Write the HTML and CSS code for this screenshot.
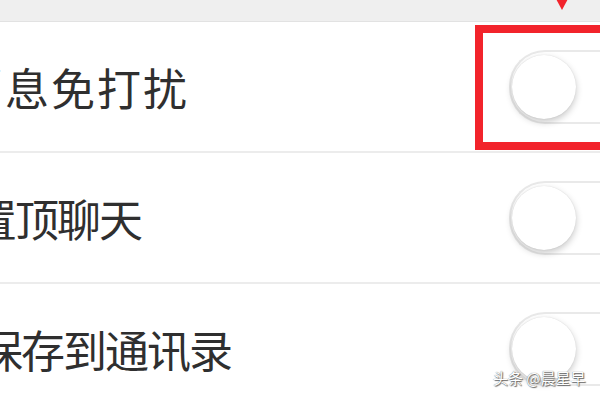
FILE: index.html
```html
<!DOCTYPE html>
<html lang="zh-CN">
<head>
  <meta charset="UTF-8" />
  <meta name="viewport" content="width=device-width, initial-scale=1.0"/>
  <title>聊天设置</title>
  <link rel="stylesheet" href="styles.css">
</head>
<body>

  <div class="top-bar">
    <span class="arrow"></span>
  </div>

  <div class="settings">
    <div class="row">
      <span class="label label-mute">消息免打扰</span>
      <span class="switch"><span class="knob"></span></span>
      <!-- highlight box -->
      <span class="highlight"></span>
    </div>
    <div class="row">
      <span class="label label-top">置顶聊天</span>
      <span class="switch"><span class="knob"></span></span>
    </div>
    <div class="row">
      <span class="label label-save">保存到通讯录</span>
      <span class="switch"><span class="knob"></span></span>
    </div>
  </div>

  <div class="watermark">头条 @晨星早</div>

</body>
</html>
```

FILE: styles.css
```css
body {
  margin: 0;
  width: 600px;
  height: 400px;
  overflow: hidden;
  background: #ffffff;
  font-family: "Noto Sans CJK SC", "Noto Sans", sans-serif;
  position: relative;
}

.top-bar {
  height: 21px;
  background: #efefef;
  border-bottom: 1px solid #e2e2e2;
  position: relative;
}

.arrow {
  position: absolute;
  left: 555px;
  top: -3px;
  width: 0;
  height: 0;
  border-left: 7px solid transparent;
  border-right: 7px solid transparent;
  border-top: 13px solid #f2232b;
}

.row {
  height: 129px;
  border-bottom: 2px solid #ececec;
  display: flex;
  align-items: center;
  justify-content: space-between;
  position: relative;
}

.label {
  font-size: 44px;
  color: #2f2f2f;
  letter-spacing: -2px;
  white-space: nowrap;
}

.label-mute {
  margin-left: -41px;
  letter-spacing: 2px;
}

.label-top {
  margin-left: -27px;
}

.label-save {
  margin-left: -21px;
}

.switch {
  width: 108px;
  height: 70px;
  border: 2px solid #e9e9e9;
  border-right: none;
  border-radius: 36px 0 0 36px;
  margin-right: -20px;
  display: flex;
  align-items: center;
  padding-left: 1px;
  box-sizing: content-box;
}

.knob {
  width: 64px;
  height: 64px;
  border-radius: 50%;
  background: #ffffff;
  box-shadow: 0 3px 7px rgba(0, 0, 0, 0.22), 0 0 1px rgba(0, 0, 0, 0.15);
}

.highlight {
  position: absolute;
  left: 475px;
  top: 3px;
  width: 140px;
  height: 109px;
  border: 8px solid #f2232b;
}

.watermark {
  position: absolute;
  left: 493px;
  top: 367px;
  font-size: 15px;
  color: #ffffff;
  text-shadow: 0 0 1px #555, 1px 1px 1px #666;
  white-space: nowrap;
}
```
